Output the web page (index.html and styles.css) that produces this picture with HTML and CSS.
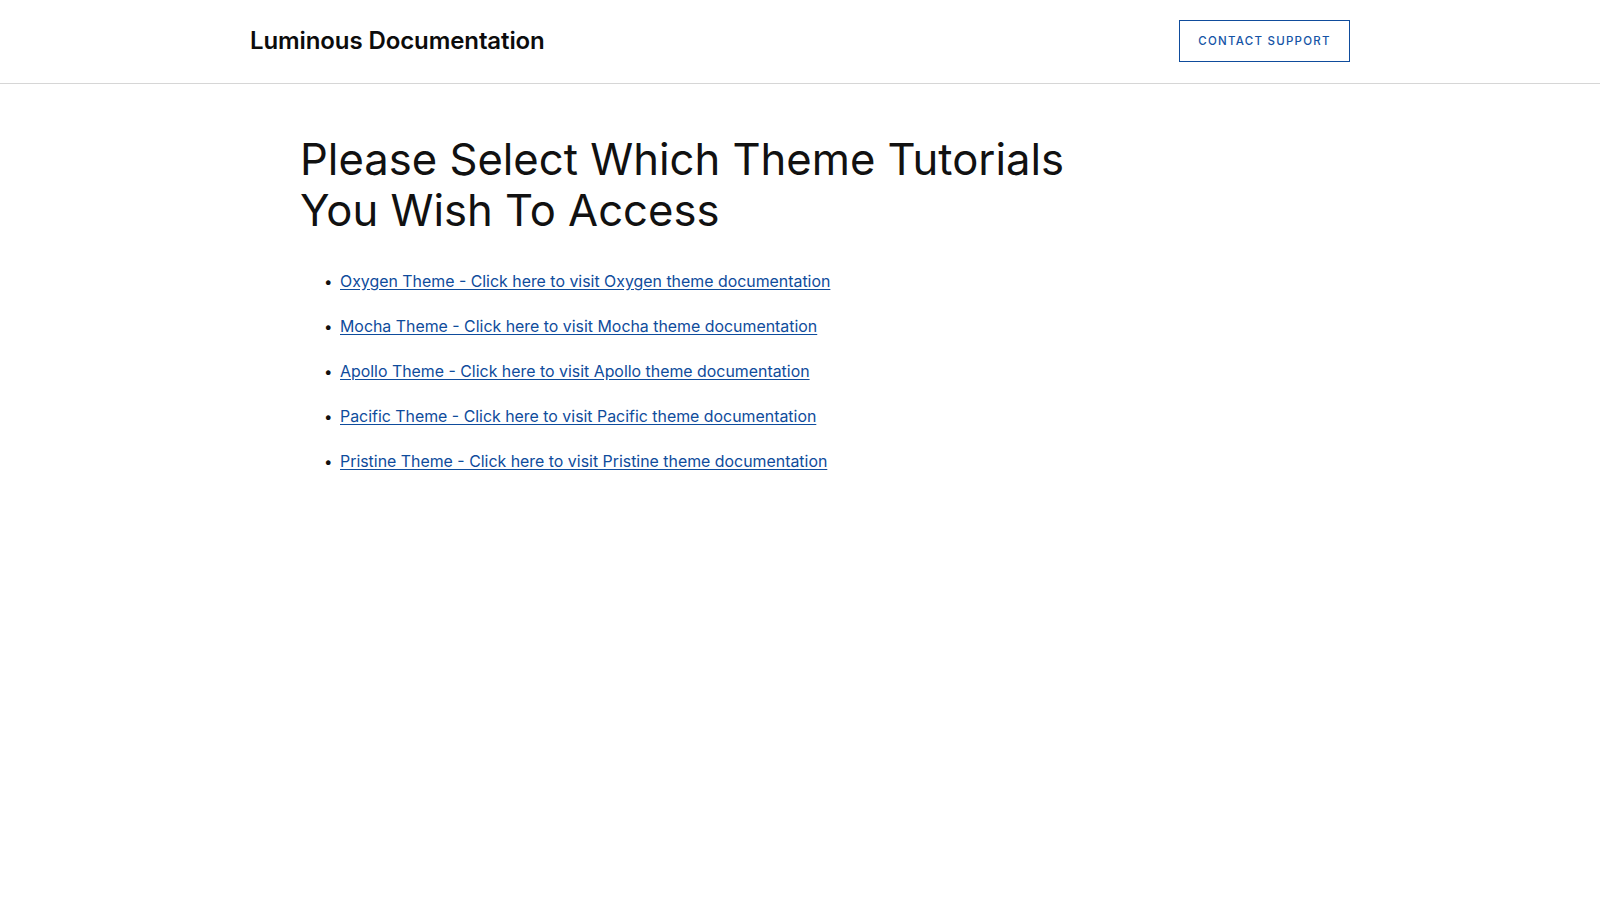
FILE: index.html
```html
<!DOCTYPE html>
<html lang="en">
<head>
<meta charset="utf-8">
<title>Luminous Documentation</title>
<link rel="stylesheet" href="styles.css">
</head>
<body>
<header class="site-header">
  <div class="header-inner">
    <a class="brand" href="#">Luminous Documentation</a>
    <a class="support-btn" href="#">Contact Support</a>
  </div>
</header>
<main class="content">
  <h1 class="page-title">Please Select Which Theme Tutorials<br>You Wish To Access</h1>
  <ul class="theme-list">
    <li><a href="#">Oxygen Theme - Click here to visit Oxygen theme documentation</a></li>
    <li><a href="#">Mocha Theme - Click here to visit Mocha theme documentation</a></li>
    <li><a href="#">Apollo Theme - Click here to visit Apollo theme documentation</a></li>
    <li><a href="#">Pacific Theme - Click here to visit Pacific theme documentation</a></li>
    <li><a href="#">Pristine Theme - Click here to visit Pristine theme documentation</a></li>
  </ul>
</main>
</body>
</html>
```
FILE: styles.css
```css
* { box-sizing: border-box; }
html, body { margin: 0; padding: 0; background: #fff; }
body { font-family: "Inter", "Liberation Sans", sans-serif; color: #111; }

.site-header {
  height: 84px;
  padding-bottom: 2px;
  border-bottom: 1px solid #d6d6d6;
}
.header-inner {
  width: 1100px;
  height: 100%;
  margin: 0 auto;
  display: flex;
  align-items: center;
  justify-content: space-between;
}
.brand {
  font-family: "Inter", sans-serif;
  font-weight: 600;
  font-size: 24px;
  letter-spacing: -0.1px;
  color: #0c0c0c;
  text-decoration: none;
}
.support-btn {
  display: inline-flex;
  align-items: center;
  justify-content: center;
  width: 171px;
  height: 42px;
  border: 1.5px solid #0f4c9c;
  color: #1554a6;
  font-family: "Inter", sans-serif;
  font-weight: 500;
  font-size: 11.5px;
  letter-spacing: 1.25px;
  text-transform: uppercase;
  text-decoration: none;
}

.content {
  width: 1000px;
  margin: 0 auto;
}
.page-title {
  font-family: "Inter", sans-serif;
  font-weight: 400;
  font-size: 43.6px;
  line-height: 51px;
  letter-spacing: 0;
  color: #111;
  margin: 0;
  padding-top: 50px;
}
.theme-list {
  margin: 34px 0 0;
  padding-left: 40px;
  list-style: none;
}
.theme-list li {
  display: list-item;
  font-size: 15.9px;
  line-height: 24px;
  margin-bottom: 21px;
  color: #111;
}
.theme-list li::marker {
  content: "\2022\2002";
  font-size: 15px;
}
.theme-list a {
  color: #0f4c9c;
  text-decoration: underline;
  text-underline-offset: 2px;
}
```
